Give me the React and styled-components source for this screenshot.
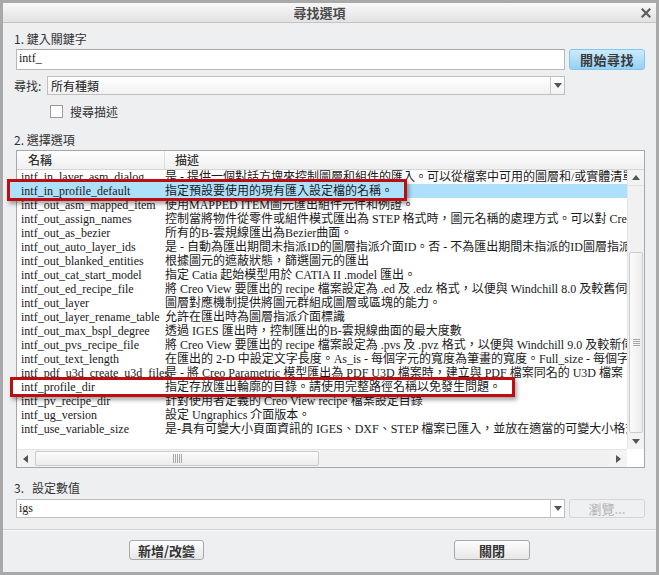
import React from 'react';
import styled, { createGlobalStyle } from 'styled-components';

const SANS = `"Noto Sans CJK TC", "Noto Sans", sans-serif`;
const SERIF = `"Liberation Serif", "Noto Sans CJK TC", serif`;

const Global = createGlobalStyle`
  html, body { margin: 0; padding: 0; background: #eeeff1; }
  * { box-sizing: border-box; }
`;

const Window = styled.div`
  width: 659px;
  height: 575px;
  border: 3px solid #a9a9a9;
  background: #eeeff1;
  display: flex;
  flex-direction: column;
  font-family: ${SANS};
  color: #333;
  overflow: hidden;
`;

const TitleBar = styled.div`
  height: 20px;
  flex: none;
  display: flex;
  align-items: center;
  background: linear-gradient(#f8f8f8, #e2e2e3);
  border-bottom: 1px solid #c4c4c4;
`;

const Title = styled.div`
  flex: 1;
  text-align: center;
  font-size: 13px;
  font-weight: 700;
  color: #4a4a4a;
  line-height: 19px;
`;

const CloseBox = styled.div`
  width: 20px;
  height: 19px;
  display: flex;
  align-items: center;
  justify-content: center;
`;

const Body = styled.div`
  padding: 0 11px 0 13px;
  display: flex;
  flex-direction: column;
`;

const Label = styled.div`
  margin-top: ${(p) => p.$mt}px;
  margin-left: -2px;
  height: 16px;
  line-height: 16px;
  font-size: 12px;
  color: #333;
  white-space: pre;
`;

const FieldRow = styled.div`
  margin-top: ${(p) => p.$mt}px;
  display: grid;
  grid-template-columns: 1fr 76px;
  column-gap: 4px;
  height: ${(p) => p.$h}px;
`;

const TextInput = styled.div`
  background: #fff;
  border: 1px solid #b9b9b9;
  border-top-color: #a9a9a9;
  font-family: ${SERIF};
  font-size: 12px;
  color: #222;
  line-height: 17px;
  padding-left: 2px;
`;

const BlueButton = styled.div`
  border: 1px solid #86c4ea;
  border-radius: 3px;
  background: linear-gradient(#cdeafc, #92d2f6);
  font-size: 13px;
  font-weight: 700;
  color: #3a3a3a;
  display: flex;
  align-items: center;
  justify-content: center;
  letter-spacing: 0.5px;
`;

const GrayButton = styled.div`
  width: ${(p) => p.$w || 76}px;
  height: ${(p) => p.$h || 20}px;
  border: 1px solid ${(p) => (p.$disabled ? '#d4d5d7' : '#a8a8a8')};
  border-radius: 3px;
  background: ${(p) => (p.$disabled ? '#eff0f1' : 'linear-gradient(#fdfdfd, #e7e7e7)')};
  font-size: 13px;
  font-weight: ${(p) => (p.$disabled ? 400 : 700)};
  color: ${(p) => (p.$disabled ? '#b2b2b2' : '#333')};
  display: flex;
  align-items: center;
  justify-content: center;
`;

const SelectLine = styled.div`
  display: flex;
  align-items: center;
`;

const SelectLabel = styled.div`
  width: 33px;
  margin-left: -2px;
  padding-right: 2px;
  font-size: 12px;
  color: #333;
`;

const Combo = styled.div`
  flex: 1;
  height: 100%;
  display: flex;
  border: 1px solid #bfbfbf;
  background: ${(p) => (p.$white ? '#fff' : 'linear-gradient(#ffffff, #f1f1f2)')};
`;

const ComboText = styled.div`
  flex: 1;
  padding-left: ${(p) => p.$pl}px;
  font-family: ${(p) => (p.$serif ? SERIF : SANS)};
  font-size: 12px;
  color: #222;
  line-height: 17px;
  white-space: nowrap;
`;

const ComboArrow = styled.div`
  width: 14px;
  border-left: 1px solid #cacaca;
  display: flex;
  align-items: center;
  justify-content: center;
`;

const Triangle = styled.div`
  width: 0;
  height: 0;
  border-left: 4px solid transparent;
  border-right: 4px solid transparent;
  border-top: 5px solid #555;
  ${(p) => p.$dir === 'up' && 'border-top: 0; border-bottom: 5px solid #555;'}
  ${(p) =>
    p.$dir === 'left' &&
    'border-top: 4px solid transparent; border-bottom: 4px solid transparent; border-left: 0; border-right: 5px solid #555;'}
  ${(p) =>
    p.$dir === 'right' &&
    'border-top: 4px solid transparent; border-bottom: 4px solid transparent; border-right: 0; border-left: 5px solid #555;'}
`;

const CheckRow = styled.div`
  margin-top: 10px;
  padding-left: 34px;
  height: 13px;
  display: flex;
  align-items: center;
  gap: 7px;
  font-size: 12px;
  color: #333;
`;

const CheckBox = styled.div`
  width: 13px;
  height: 13px;
  background: #fff;
  border: 1px solid #9a9a9a;
`;

const ListBox = styled.div`
  margin-top: 2px;
  height: 318px;
  border: 1px solid #a7a7a7;
  background: #fff;
  display: flex;
  flex-direction: column;
`;

const Header = styled.div`
  height: 19px;
  flex: none;
  display: flex;
  border-bottom: 1px solid #d6d6d6;
  background: linear-gradient(#fdfdfd, #f0f0f0);
  font-size: 12px;
  color: #333;
  line-height: 18px;
`;

const HeaderCell = styled.div`
  width: ${(p) => (p.$w ? `${p.$w}px` : 'auto')};
  flex: ${(p) => (p.$w ? 'none' : 1)};
  padding-left: ${(p) => p.$pl}px;
  border-right: ${(p) => (p.$w ? '1px solid #dcdcdc' : 'none')};
  font-weight: 500;
`;

const ListMain = styled.div`
  height: 279px;
  display: flex;
`;

const Rows = styled.div`
  flex: 1;
  min-width: 0;
  display: flex;
  flex-direction: column;
`;

const Row = styled.div`
  height: 14px;
  flex: none;
  display: flex;
  font-family: ${SERIF};
  font-size: 12px;
  line-height: 14px;
  color: #1a1a1a;
  background: ${(p) => (p.$selected ? '#ade0fa' : 'transparent')};
  position: relative;
  ${(p) => p.$mark && 'z-index: 2;'}
`;

const NameCell = styled.div`
  width: 148px;
  flex: none;
  padding-left: 4px;
  white-space: nowrap;
  position: relative;
  z-index: 1;
`;

const DescCell = styled.div`
  flex: 1;
  min-width: 0;
  overflow: hidden;
  white-space: nowrap;
  position: relative;
  z-index: 1;
`;

const MarkFrame = styled.div`
  position: absolute;
  z-index: 0;
  left: ${(p) => p.$left}px;
  top: ${(p) => p.$top}px;
  width: ${(p) => p.$w}px;
  height: ${(p) => p.$h}px;
  border: 3px solid #bb0d12;
  background: ${(p) => p.$bg};
  box-shadow: 2px 3px 4px rgba(0, 0, 0, 0.35);
`;

const VScroll = styled.div`
  width: 17px;
  flex: none;
  display: flex;
  flex-direction: column;
  background: #f1f1f1;
  border-left: 1px solid #e4e4e4;
`;

const ArrowBtn = styled.div`
  width: ${(p) => p.$w || 16}px;
  height: ${(p) => p.$h || 16}px;
  flex: none;
  display: flex;
  align-items: center;
  justify-content: center;
  background: #f3f3f3;
  ${(p) => p.$edge}
`;

const VTrack = styled.div`
  flex: 1;
  padding-top: 66px;
  display: flex;
  flex-direction: column;
`;

const VThumb = styled.div`
  height: 181px;
  margin: 0 1px;
  border: 1px solid #cbcbcb;
  border-radius: 2px;
  background: linear-gradient(to right, #fbfbfb, #ececec);
  display: flex;
  align-items: center;
  justify-content: center;
`;

const Grip = styled.div`
  width: ${(p) => (p.$vertical ? 7 : 9)}px;
  height: ${(p) => (p.$vertical ? 7 : 9)}px;
  background: ${(p) =>
    p.$vertical
      ? 'repeating-linear-gradient(#a8a8a8 0 1px, transparent 1px 2px)'
      : 'repeating-linear-gradient(to right, #a8a8a8 0 1px, transparent 1px 2px)'};
`;

const HScrollRow = styled.div`
  height: 18px;
  flex: none;
  display: flex;
`;

const HScroll = styled.div`
  flex: 1;
  display: flex;
  align-items: stretch;
  background: #f1f1f1;
  border-top: 1px solid #e4e4e4;
`;

const HTrack = styled.div`
  flex: 1;
  display: flex;
  padding: 1px 0;
`;

const HThumb = styled.div`
  width: 284px;
  margin-left: 1px;
  border: 1px solid #cbcbcb;
  border-radius: 2px;
  background: linear-gradient(#fbfbfb, #ececec);
  display: flex;
  align-items: center;
  justify-content: center;
`;

const Corner = styled.div`
  width: 17px;
  background: #fff;
`;

const Footer = styled.div`
  margin-top: 11px;
  flex: 1;
  border-top: 1px solid #cfd0d2;
  box-shadow: inset 0 1px 0 #fafafa;
  display: flex;
  justify-content: center;
  align-items: flex-start;
  gap: 250px;
  padding-top: 10px;
`;

const rows = [
  ['intf_in_layer_asm_dialog', '是 - 提供一個對話方塊來控制圖層和組件的匯入。可以從檔案中可用的圖層和/或實體清單中選擇'],
  ['intf_in_profile_default', '指定預設要使用的現有匯入設定檔的名稱。'],
  ['intf_out_asm_mapped_item', '使用MAPPED ITEM圖元匯出組件元件和例證。'],
  ['intf_out_assign_names', '控制當將物件從零件或組件模式匯出為 STEP 格式時，圖元名稱的處理方式。可以對 Creo'],
  ['intf_out_as_bezier', '所有的B-雲規線匯出為Bezier曲面。'],
  ['intf_out_auto_layer_ids', '是 - 自動為匯出期間未指派ID的圖層指派介面ID。否 - 不為匯出期間未指派的ID圖層指派'],
  ['intf_out_blanked_entities', '根據圖元的遮蔽狀態，篩選圖元的匯出'],
  ['intf_out_cat_start_model', '指定 Catia 起始模型用於 CATIA II .model 匯出。'],
  ['intf_out_ed_recipe_file', '將 Creo View 要匯出的 recipe 檔案設定為 .ed 及 .edz 格式，以便與 Windchill 8.0 及較舊伺服器'],
  ['intf_out_layer', '圖層對應機制提供將圖元群組成圖層或區塊的能力。'],
  ['intf_out_layer_rename_table', '允許在匯出時為圖層指派介面標識'],
  ['intf_out_max_bspl_degree', '透過 IGES 匯出時，控制匯出的B-雲規線曲面的最大度數'],
  ['intf_out_pvs_recipe_file', '將 Creo View 要匯出的 recipe 檔案設定為 .pvs 及 .pvz 格式，以便與 Windchill 9.0 及較新伺服器'],
  ['intf_out_text_length', '在匯出的 2-D 中設定文字長度。As_is - 每個字元的寬度為筆畫的寬度。Full_size - 每個字元'],
  ['intf_pdf_u3d_create_u3d_files', '是 - 將 Creo Parametric 模型匯出為 PDF U3D 檔案時，建立與 PDF 檔案同名的 U3D 檔案。'],
  ['intf_profile_dir', '指定存放匯出輪廓的目錄。請使用完整路徑名稱以免發生問題。'],
  ['intf_pv_recipe_dir', '針對使用者定義的 Creo View recipe 檔案設定目錄'],
  ['intf_ug_version', '設定 Ungraphics 介面版本。'],
  ['intf_use_variable_size', '是-具有可變大小頁面資訊的 IGES、DXF、STEP 檔案已匯入，並放在適當的可變大小格式中'],
];

const marks = {
  1: { left: -10, top: -5, w: 400, h: 22, bg: '#ade0fa' },
  15: { left: -7, top: -3, w: 505, h: 20, bg: '#ffffff' },
};

const CloseIcon = () => (
  <svg width="10" height="10" viewBox="0 0 10 10">
    <path d="M1.5 1.5 L8.5 8.5 M8.5 1.5 L1.5 8.5" stroke="#5e5e5e" strokeWidth="2.2" strokeLinecap="square" />
  </svg>
);

export default function App() {
  return (
    <>
      <Global />
      <Window>
        <TitleBar>
          <Title>尋找選項</Title>
          <CloseBox>
            <CloseIcon />
          </CloseBox>
        </TitleBar>
        <Body>
          <Label $mt={8}>1. 鍵入關鍵字</Label>
          <FieldRow $mt={2} $h={20}>
            <TextInput>intf_</TextInput>
            <BlueButton>開始尋找</BlueButton>
          </FieldRow>
          <FieldRow $mt={7} $h={19}>
            <SelectLine>
              <SelectLabel>尋找:</SelectLabel>
              <Combo>
                <ComboText $pl={3}>所有種類</ComboText>
                <ComboArrow>
                  <Triangle />
                </ComboArrow>
              </Combo>
            </SelectLine>
          </FieldRow>
          <CheckRow>
            <CheckBox />
            <span>搜尋描述</span>
          </CheckRow>
          <Label $mt={14}>2. 選擇選項</Label>
          <ListBox>
            <Header>
              <HeaderCell $w={148} $pl={11}>名稱</HeaderCell>
              <HeaderCell $pl={10}>描述</HeaderCell>
            </Header>
            <ListMain>
              <Rows>
                {rows.map(([name, desc], i) => {
                  const m = marks[i];
                  return (
                    <Row key={name} $selected={i === 1} $mark={!!m}>
                      {m && <MarkFrame $left={m.left} $top={m.top} $w={m.w} $h={m.h} $bg={m.bg} />}
                      <NameCell>{name}</NameCell>
                      <DescCell>{desc}</DescCell>
                    </Row>
                  );
                })}
              </Rows>
              <VScroll>
                <ArrowBtn $edge="border-bottom: 1px solid #e2e2e2;">
                  <Triangle $dir="up" />
                </ArrowBtn>
                <VTrack>
                  <VThumb>
                    <Grip $vertical />
                  </VThumb>
                </VTrack>
                <ArrowBtn>
                  <Triangle />
                </ArrowBtn>
              </VScroll>
            </ListMain>
            <HScrollRow>
              <HScroll>
                <ArrowBtn $w={17} $h={17}>
                  <Triangle $dir="left" />
                </ArrowBtn>
                <HTrack>
                  <HThumb>
                    <Grip />
                  </HThumb>
                </HTrack>
                <ArrowBtn $w={18} $h={17}>
                  <Triangle $dir="right" />
                </ArrowBtn>
              </HScroll>
              <Corner />
            </HScrollRow>
          </ListBox>
          <Label $mt={12}>{'3.   設定數值'}</Label>
          <FieldRow $mt={3} $h={19}>
            <Combo $white>
              <ComboText $pl={2} $serif>igs</ComboText>
              <ComboArrow>
                <Triangle />
              </ComboArrow>
            </Combo>
            <GrayButton $disabled $h={19}>瀏覽...</GrayButton>
          </FieldRow>
        </Body>
        <Footer>
          <GrayButton $w={75}>新增/改變</GrayButton>
          <GrayButton $w={76}>關閉</GrayButton>
        </Footer>
      </Window>
    </>
  );
}
